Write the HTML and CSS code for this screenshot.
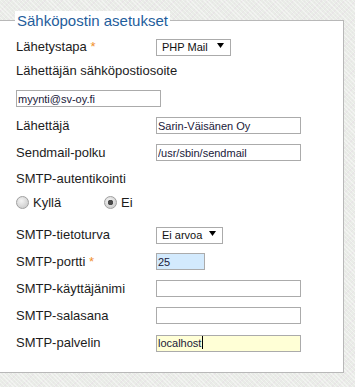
FILE: index.html
```html
<!DOCTYPE html>
<html lang="fi">
<head>
<meta charset="utf-8">
<title>Sähköpostin asetukset</title>
<link rel="stylesheet" href="styles.css">
</head>
<body>
<form class="page">
  <fieldset class="panel">
    <legend class="panel-title">Sähköpostin asetukset</legend>

    <div class="row">
      <label class="lbl">Lähetystapa <span class="req">*</span></label>
      <span class="select-wrap sel-mail">
        <select class="select"><option>PHP Mail</option></select>
        <svg class="arrow" width="7" height="5" viewBox="0 0 7 5"><path d="M0 0H7L3.5 5Z" fill="#000"/></svg>
      </span>
    </div>

    <div class="row row-label gap-7">
      <label class="lbl lbl-wide">Lähettäjän sähköpostiosoite</label>
    </div>

    <div class="row gap-11">
      <input class="field w145" type="text" value="myynti@sv-oy.fi">
    </div>

    <div class="row">
      <label class="lbl">Lähettäjä</label>
      <input class="field w145" type="text" value="Sarin-Väisänen Oy">
    </div>

    <div class="row">
      <label class="lbl">Sendmail-polku</label>
      <input class="field w145" type="text" value="/usr/sbin/sendmail">
    </div>

    <div class="row row-label gap-9">
      <label class="lbl lbl-wide">SMTP-autentikointi</label>
    </div>

    <div class="row radios gap-7">
      <label class="radio-opt"><input class="radio" type="radio" name="auth"> Kyllä</label>
      <label class="radio-opt"><input class="radio" type="radio" name="auth" checked> Ei</label>
    </div>

    <div class="row gap-15">
      <label class="lbl">SMTP-tietoturva</label>
      <span class="select-wrap sel-sec">
        <select class="select"><option>Ei arvoa</option></select>
        <svg class="arrow" width="7" height="5" viewBox="0 0 7 5"><path d="M0 0H7L3.5 5Z" fill="#000"/></svg>
      </span>
    </div>

    <div class="row">
      <label class="lbl">SMTP-portti <span class="req">*</span></label>
      <input class="field w49 field-blue" type="text" value="25">
    </div>

    <div class="row">
      <label class="lbl">SMTP-käyttäjänimi</label>
      <input class="field w145" type="text" value="">
    </div>

    <div class="row">
      <label class="lbl">SMTP-salasana</label>
      <input class="field w145" type="password" value="">
    </div>

    <div class="row">
      <label class="lbl">SMTP-palvelin</label>
      <span class="caret-wrap">
        <input class="field w145 field-yellow" type="text" value="localhost">
        <span class="caret"></span>
      </span>
    </div>
  </fieldset>
</form>
</body>
</html>
```

FILE: styles.css
```css
html, body {
  margin: 0;
  padding: 0;
}

body {
  width: 355px;
  height: 387px;
  overflow: hidden;
  background-color: #e9ece7;
  background-image:
    repeating-linear-gradient(45deg, rgba(255,255,255,0.4) 0 1px, transparent 1px 3px),
    repeating-linear-gradient(-45deg, rgba(225,205,225,0.25) 0 1px, transparent 1px 4px);
  font-family: "Liberation Sans", Arial, sans-serif;
  color: #1c1c1c;
}

.page {
  margin: 0;
}

.panel {
  box-sizing: border-box;
  width: 344px;
  margin: 11px 0 0 0;
  padding: 8px 0 21px 16px;
  border: 1px solid #b8b8b8;
  border-left: none;
  background: #fff;
  display: flex;
  flex-direction: column;
  gap: 10px;
  min-width: 0;
}

.panel-title {
  margin-left: -1px;
  padding: 0 2px;
  background: #fff;
  font-size: 15px;
  line-height: 19px;
  color: #1f5e9c;
}

.row {
  display: flex;
  align-items: center;
  height: 17px;
  font-size: 13px;
  line-height: 17px;
}

.gap-7 { margin-top: -3px; }
.gap-9 { margin-top: -1px; }
.gap-11 { margin-top: 1px; }
.gap-15 { margin-top: 5px; }

.lbl {
  width: 140px;
  flex: none;
  white-space: nowrap;
}

.lbl-wide {
  width: auto;
}

.req {
  color: #f0902c;
}

.field {
  box-sizing: border-box;
  height: 17px;
  margin: 0;
  padding: 0 1px;
  border: 1px solid #ababab;
  border-radius: 0;
  background: #fff;
  font-family: "Liberation Sans", Arial, sans-serif;
  font-size: 11px;
  color: #20203a;
  outline: none;
}

.w145 { width: 145px; }
.w49 { width: 49px; }

.field-blue {
  background: #d3eafd;
}

.field-yellow {
  background: #ffffd6;
}

.select-wrap {
  position: relative;
  display: inline-block;
  height: 17px;
}

.sel-mail { width: 75px; }
.sel-sec { width: 67px; }

.select {
  box-sizing: border-box;
  appearance: none;
  -webkit-appearance: none;
  width: 100%;
  height: 17px;
  margin: 0;
  padding: 0 0 0 5px;
  border: 1px solid #ababab;
  border-radius: 0;
  background: #fff;
  font-family: "Liberation Sans", Arial, sans-serif;
  font-size: 11px;
  line-height: 15px;
  color: #111;
}

.arrow {
  position: absolute;
  right: 7px;
  top: 5px;
  pointer-events: none;
}

.radios {
  gap: 0;
}

.radio-opt {
  display: flex;
  align-items: center;
  gap: 4px;
  width: 88px;
}

.radio {
  appearance: none;
  -webkit-appearance: none;
  box-sizing: border-box;
  width: 13px;
  height: 13px;
  margin: 0;
  border: 1px solid #a0a0a0;
  border-radius: 50%;
  background: radial-gradient(circle at 40% 35%, #f4f4f4 0%, #d6d6d6 60%, #c4c4c4 100%);
  position: relative;
}

.radio:checked {
  background:
    radial-gradient(circle, #4a4a4a 0 2.5px, transparent 3px),
    radial-gradient(circle at 40% 35%, #f4f4f4 0%, #d6d6d6 60%, #c4c4c4 100%);
}

.caret-wrap {
  position: relative;
  display: inline-block;
  height: 17px;
}

.caret {
  position: absolute;
  left: 46px;
  top: 2px;
  width: 1px;
  height: 13px;
  background: #000;
}
```
